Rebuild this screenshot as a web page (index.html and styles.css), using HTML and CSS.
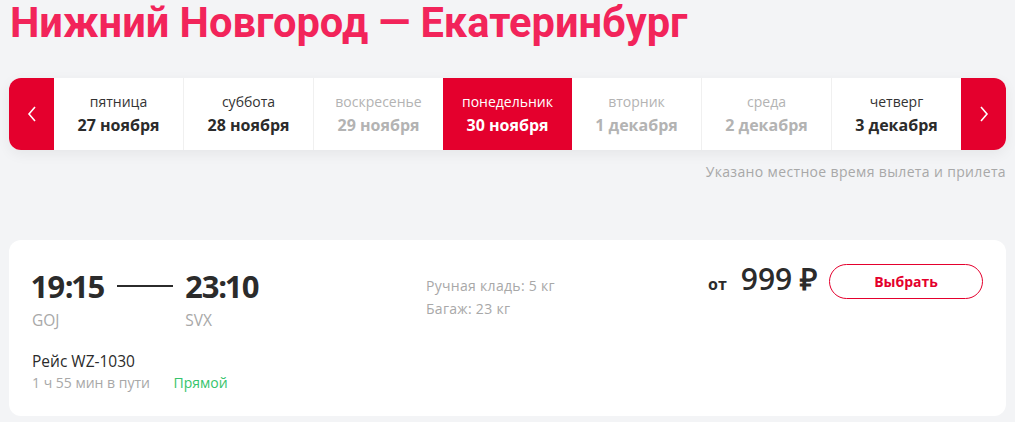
FILE: index.html
```html
<!DOCTYPE html>
<html lang="ru">
<head>
    <meta charset="UTF-8">
    <title>Нижний Новгород — Екатеринбург</title>
    <link rel="stylesheet" href="styles.css">
</head>
<body>

    <h1 class="title">Нижний Новгород — Екатеринбург</h1>

    <!-- Лента дат -->
    <div class="dates">
        <button class="arrow arrow-left">
            <svg width="10" height="16" viewBox="0 0 10 16"><path d="M8 1 L2 8 L8 15" fill="none" stroke="#fff" stroke-width="1.6"/></svg>
        </button>
        <div class="day">
            <span class="day-name">пятница</span>
            <span class="day-date">27 ноября</span>
        </div>
        <div class="day">
            <span class="day-name">суббота</span>
            <span class="day-date">28 ноября</span>
        </div>
        <div class="day disabled">
            <span class="day-name">воскресенье</span>
            <span class="day-date">29 ноября</span>
        </div>
        <div class="day active">
            <span class="day-name">понедельник</span>
            <span class="day-date">30 ноября</span>
        </div>
        <div class="day disabled">
            <span class="day-name">вторник</span>
            <span class="day-date">1 декабря</span>
        </div>
        <div class="day disabled">
            <span class="day-name">среда</span>
            <span class="day-date">2 декабря</span>
        </div>
        <div class="day">
            <span class="day-name">четверг</span>
            <span class="day-date">3 декабря</span>
        </div>
        <button class="arrow arrow-right">
            <svg width="10" height="16" viewBox="0 0 10 16"><path d="M2 1 L8 8 L2 15" fill="none" stroke="#fff" stroke-width="1.6"/></svg>
        </button>
    </div>

    <p class="note">Указано местное время вылета и прилета</p>

    <!-- Карточка рейса -->
    <div class="flight">
        <div class="flight-main">
            <div class="times">
                <div class="point">
                    <span class="time">19:15</span>
                    <span class="code">GOJ</span>
                </div>
                <span class="dash"></span>
                <div class="point">
                    <span class="time">23:10</span>
                    <span class="code">SVX</span>
                </div>
            </div>
            <div class="flight-info">
                <span class="flight-num">Рейс WZ-1030</span>
                <span class="duration">1 ч 55 мин в пути <span class="direct">Прямой</span></span>
            </div>
        </div>
        <div class="baggage">
            <span>Ручная кладь: 5 кг</span>
            <span>Багаж: 23 кг</span>
        </div>
        <div class="price-box">
            <span class="price"><span class="from">от</span>999 ₽</span>
            <button class="choose">Выбрать</button>
        </div>
    </div>

</body>
</html>
```

FILE: styles.css
```css
body {
    margin: 0;
    padding: 0 9px;
    background-color: #f3f4f6;
    font-family: "Open Sans", Arial, sans-serif;
    color: #2b2b2b;
}
.title {
    margin: 0;
    padding: 0 0 0 1px;
    height: 78px;
    font-family: Roboto, Arial, sans-serif;
    font-size: 41.6px;
    line-height: 46px;
    font-weight: 700;
    color: #f2245a;
}
.dates {
    display: flex;
    height: 72px;
    background-color: #fff;
    border-radius: 12px;
    overflow: hidden;
    box-shadow: 0 4px 14px rgba(0, 0, 0, 0.06);
}
.arrow {
    width: 45px;
    flex: none;
    border: none;
    padding: 0;
    background-color: #e4002d;
    display: flex;
    align-items: center;
    justify-content: center;
    cursor: pointer;
}
.day {
    flex: 1;
    display: flex;
    flex-direction: column;
    align-items: center;
    justify-content: center;
    gap: 2px;
    border-left: 1px solid #f0f0f0;
}
.day:nth-child(2) {
    border-left: none;
}
.day-name {
    font-size: 14px;
    line-height: 20px;
    color: #333;
}
.day-date {
    font-size: 16px;
    line-height: 22px;
    font-weight: 700;
    color: #2b2b2b;
}
.day.disabled .day-name,
.day.disabled .day-date {
    color: #b3b3b3;
}
.day.active {
    background-color: #e4002d;
    border-left: none;
}
.day.active .day-name,
.day.active .day-date {
    color: #fff;
}
.day.active + .day {
    border-left: none;
}
.note {
    margin: 12px 0 0;
    text-align: right;
    font-size: 14px;
    letter-spacing: 0.35px;
    color: #a8a8a8;
    height: 78px;
}
.flight {
    display: flex;
    background-color: #fff;
    border-radius: 12px;
    height: 176px;
    padding: 24px 23px 0;
    box-sizing: border-box;
}
.flight-main {
    width: 394px;
}
.times {
    display: flex;
    align-items: flex-start;
}
.point {
    display: flex;
    flex-direction: column;
}
.time {
    font-family: "Open Sans", Arial, sans-serif;
    font-size: 31px;
    line-height: 44px;
    font-weight: 700;
    letter-spacing: -1px;
    font-variant-numeric: proportional-nums;
    color: #2b2b2b;
}
.code {
    font-size: 15.5px;
    line-height: 24px;
    color: #a8a8a8;
}
.dash {
    width: 56px;
    height: 2px;
    background-color: #2b2b2b;
    margin: 21px 12px 0 13px;
}
.flight-info {
    display: flex;
    flex-direction: column;
    margin-top: 18px;
}
.flight-num {
    font-size: 15.5px;
    line-height: 22px;
    color: #2b2b2b;
}
.duration {
    font-size: 14px;
    line-height: 22px;
    color: #a8a8a8;
}
.direct {
    color: #36c46c;
    margin-left: 20px;
}
.baggage {
    display: flex;
    flex-direction: column;
    padding-top: 10px;
    font-size: 14px;
    line-height: 23px;
    letter-spacing: 0.3px;
    color: #a8a8a8;
}
.price-box {
    margin-left: auto;
    display: flex;
    align-items: center;
    height: 35px;
}
.price {
    font-size: 30px;
    line-height: 40px;
    font-weight: 600;
    color: #2b2b2b;
}
.from {
    font-size: 16px;
    font-weight: 700;
    margin-right: 14px;
}
.choose {
    width: 154px;
    height: 35px;
    margin: 0 0 0 12px;
    border: 1px solid #e4002d;
    border-radius: 18px;
    background-color: #fff;
    color: #e4002d;
    font-family: inherit;
    font-size: 14px;
    font-weight: 700;
    cursor: pointer;
}
```
